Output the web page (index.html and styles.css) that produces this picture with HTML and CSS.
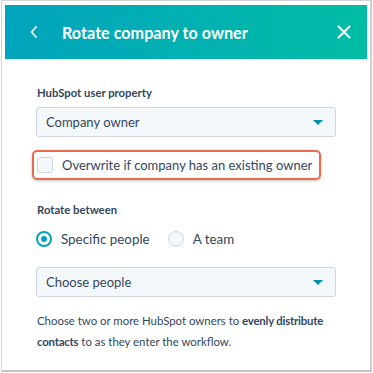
FILE: index.html
```html
<!DOCTYPE html>
<html>
<head>
<meta charset="utf-8">
<link rel="stylesheet" href="styles.css">
</head>
<body>
<div class="frame">
  <div class="panel">
    <div class="header">
      <svg class="back" width="10" height="14" viewBox="0 0 10 14"><path d="M7 2 L2.5 7 L7 12" fill="none" stroke="#fff" stroke-width="1.8" stroke-linecap="round" stroke-linejoin="round"/></svg>
      <div class="title">Rotate company to owner</div>
      <svg class="close" width="14" height="14" viewBox="0 0 14 14"><path d="M1.5 1.5 L12.5 12.5 M12.5 1.5 L1.5 12.5" fill="none" stroke="#fff" stroke-width="2" stroke-linecap="round"/></svg>
    </div>
    <div class="content">
      <div class="label">HubSpot user property</div>
      <div class="select"><span>Company owner</span><span class="caret"></span></div>
      <div class="highlight">
        <span class="checkbox"></span>
        <span class="check-text">Overwrite if company has an existing owner</span>
      </div>
      <div class="label label-rotate">Rotate between</div>
      <div class="radios">
        <div class="radio-item"><span class="radio on"></span><span>Specific people</span></div>
        <div class="radio-item"><span class="radio"></span><span>A team</span></div>
      </div>
      <div class="select select-people"><span>Choose people</span><span class="caret"></span></div>
      <p class="help">Choose two or more HubSpot owners to <b>evenly distribute contacts</b> to as they enter the workflow.</p>
    </div>
  </div>
</div>
</body>
</html>
```
FILE: styles.css
```css
* { box-sizing: border-box; }
html, body { margin: 0; padding: 0; background: #fff; }
body { font-family: Lato, "Open Sans", sans-serif; color: #33475b; }
.frame {
  margin: 0 0 0 1px;
  width: 371px;
  height: 372px;
  border: 1px solid #d4d4d4;
  border-bottom: 2px solid #c6c6c6;
  border-right: 2px solid #d0d0d0;
  padding: 4px 3px 0 3px;
}
.panel { background: #fff; }
.header {
  height: 54px;
  background: linear-gradient(90deg, #00a4bd 0%, #00bda5 100%);
  display: flex;
  align-items: center;
  padding: 0 16px 0 24px;
  color: #fff;
}
.back { margin-right: 23px; }
.title { font-size: 16.2px; font-weight: 700; flex: 1; white-space: nowrap; }
.content { padding: 25px 31px 0 31px; }
.label { font-size: 11.3px; font-weight: 700; line-height: 18px; padding-left: 1px; white-space: nowrap; }
.select {
  margin-top: 5px;
  height: 30px;
  background: #f5f8fa;
  border: 1px solid #cbd6e2;
  border-radius: 3px;
  display: flex;
  align-items: center;
  justify-content: space-between;
  padding: 0 12px 0 9px;
  font-size: 13px;
}
.caret {
  width: 0; height: 0;
  border-left: 5px solid transparent;
  border-right: 5px solid transparent;
  border-top: 5px solid #0091ae;
}
.highlight {
  margin: 13px 0 0 -4px;
  width: 289px;
  height: 30px;
  border: 2.5px solid #ec6a4c;
  border-radius: 5px;
  display: flex;
  align-items: center;
  padding-left: 3px;
  box-shadow: 0 1px 3px rgba(0,0,0,0.25);
  font-size: 13px;
  white-space: nowrap;
}
.checkbox {
  flex: none;
  width: 16px; height: 16px;
  border: 1px solid #cbd6e2;
  border-radius: 3px;
  background: #f5f8fa;
  margin-right: 9px;
}
.label-rotate { margin-top: 21px; }
.radios { display: flex; align-items: center; height: 20px; margin-top: 10px; font-size: 13.4px; }
.radio-item { display: flex; align-items: center; margin-right: 18px; }
.radio {
  width: 16px; height: 16px;
  border-radius: 50%;
  border: 1px solid #cbd6e2;
  background: #f5f8fa;
  margin-right: 9px;
  position: relative;
}
.radio.on { border: 2px solid #00a4bd; background: #fff; }
.radio.on::after {
  content: "";
  position: absolute;
  left: 3px; top: 3px;
  width: 6px; height: 6px;
  border-radius: 50%;
  background: #00a4bd;
}
.select-people { margin-top: 18px; }
.help { margin: 13px 0 0 0; font-size: 11.4px; line-height: 21px; padding-left: 1px; margin-right: -4px; }
.help b { font-weight: 700; letter-spacing: -0.2px; }
```
